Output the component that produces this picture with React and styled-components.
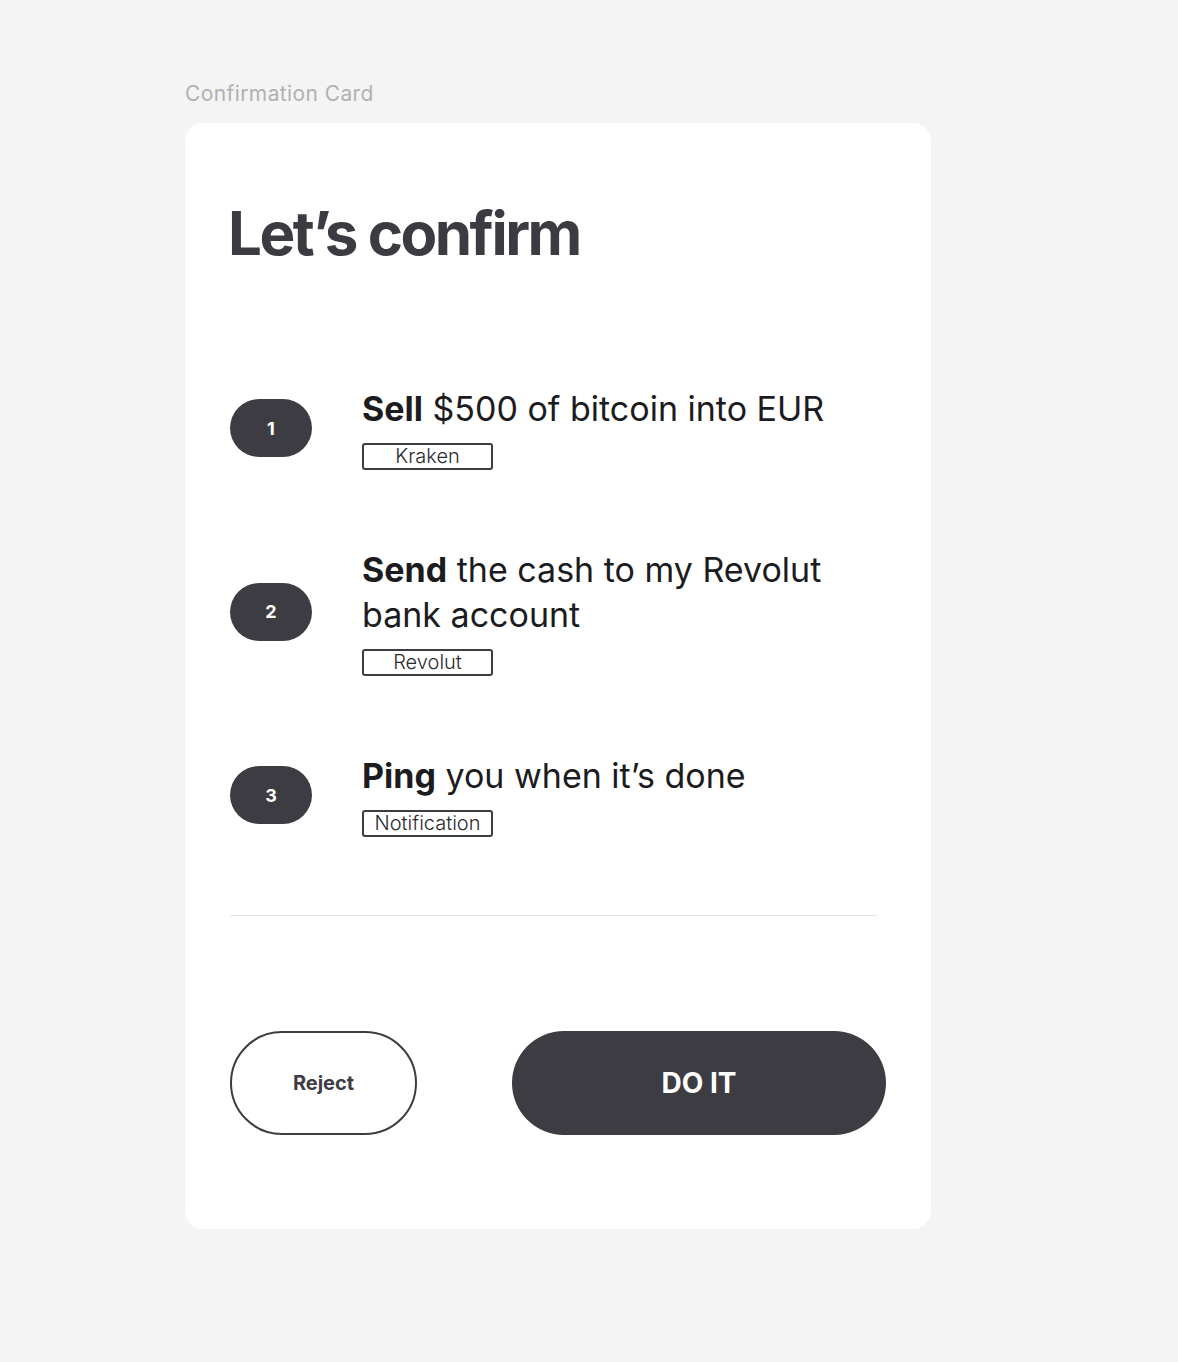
import React from "react";
import styled, { createGlobalStyle } from "styled-components";

const GlobalStyle = createGlobalStyle`
  body {
    margin: 0;
    background: #f4f4f4;
    font-family: Inter, "Noto Sans", sans-serif;
  }
`;

const Page = styled.div`
  padding: 81px 0 0 185px;
`;

const Label = styled.div`
  font-size: 21px;
  letter-spacing: 0.4px;
  color: #b1b1b1;
  margin-bottom: 17px;
`;

const Card = styled.div`
  width: 746px;
  box-sizing: border-box;
  background: #ffffff;
  border-radius: 18px;
  padding: 74px 45px 94px 45px;
`;

const Title = styled.h1`
  margin: 0 0 117px -2px;
  font-size: 60px;
  font-weight: 700;
  letter-spacing: -2.5px;
  color: #3c3b41;
  line-height: normal;
`;

const Steps = styled.div`
  display: flex;
  flex-direction: column;
  gap: 77px;
`;

const Step = styled.div`
  display: flex;
  align-items: center;
  gap: 50px;
`;

const Badge = styled.div`
  flex: none;
  width: 82px;
  height: 58px;
  border-radius: 29px;
  background: #3d3c42;
  color: #ffffff;
  font-size: 18px;
  font-weight: 700;
  display: flex;
  align-items: center;
  justify-content: center;
`;

const Body = styled.div`
  display: flex;
  flex-direction: column;
  align-items: flex-start;
`;

const Text = styled.div`
  font-size: 34px;
  line-height: 45px;
  color: #1c1c1f;
  max-width: 470px;

  b {
    font-weight: 700;
  }
`;

const Tag = styled.div`
  margin-top: 12px;
  width: 131px;
  height: 27px;
  box-sizing: border-box;
  border: 2px solid #3d3c42;
  border-radius: 3px;
  font-size: 20px;
  font-weight: 300;
  line-height: 23px;
  text-align: center;
  color: #2a2a2e;
`;

const Divider = styled.hr`
  margin: 78px 9px 115px 0;
  border: none;
  border-top: 1px solid #e2e2e2;
`;

const Actions = styled.div`
  display: flex;
  justify-content: space-between;
`;

const Button = styled.button`
  height: 104px;
  border-radius: 52px;
  font-family: Inter, "Noto Sans", sans-serif;
  font-weight: 700;
  cursor: pointer;
  box-sizing: border-box;
  width: ${(p) => (p.$primary ? "374px" : "187px")};
  font-size: ${(p) => (p.$primary ? "28px" : "20px")};
  background: ${(p) => (p.$primary ? "#3d3c42" : "#ffffff")};
  color: ${(p) => (p.$primary ? "#ffffff" : "#3d3c42")};
  border: ${(p) => (p.$primary ? "none" : "2px solid #3d3c42")};
`;

const steps = [
  { verb: "Sell", rest: "$500 of bitcoin into EUR", tag: "Kraken" },
  { verb: "Send", rest: "the cash to my Revolut bank account", tag: "Revolut" },
  { verb: "Ping", rest: "you when it’s done", tag: "Notification" },
];

const App = () => {
  return (
    <Page>
      <GlobalStyle />
      <Label>Confirmation Card</Label>
      <Card>
        <Title>Let’s confirm</Title>
        <Steps>
          {steps.map((s, i) => (
            <Step key={s.tag}>
              <Badge>{i + 1}</Badge>
              <Body>
                <Text>
                  <b>{s.verb}</b> {s.rest}
                </Text>
                <Tag>{s.tag}</Tag>
              </Body>
            </Step>
          ))}
        </Steps>
        <Divider />
        <Actions>
          <Button>Reject</Button>
          <Button $primary>DO IT</Button>
        </Actions>
      </Card>
    </Page>
  );
};

export default App;
